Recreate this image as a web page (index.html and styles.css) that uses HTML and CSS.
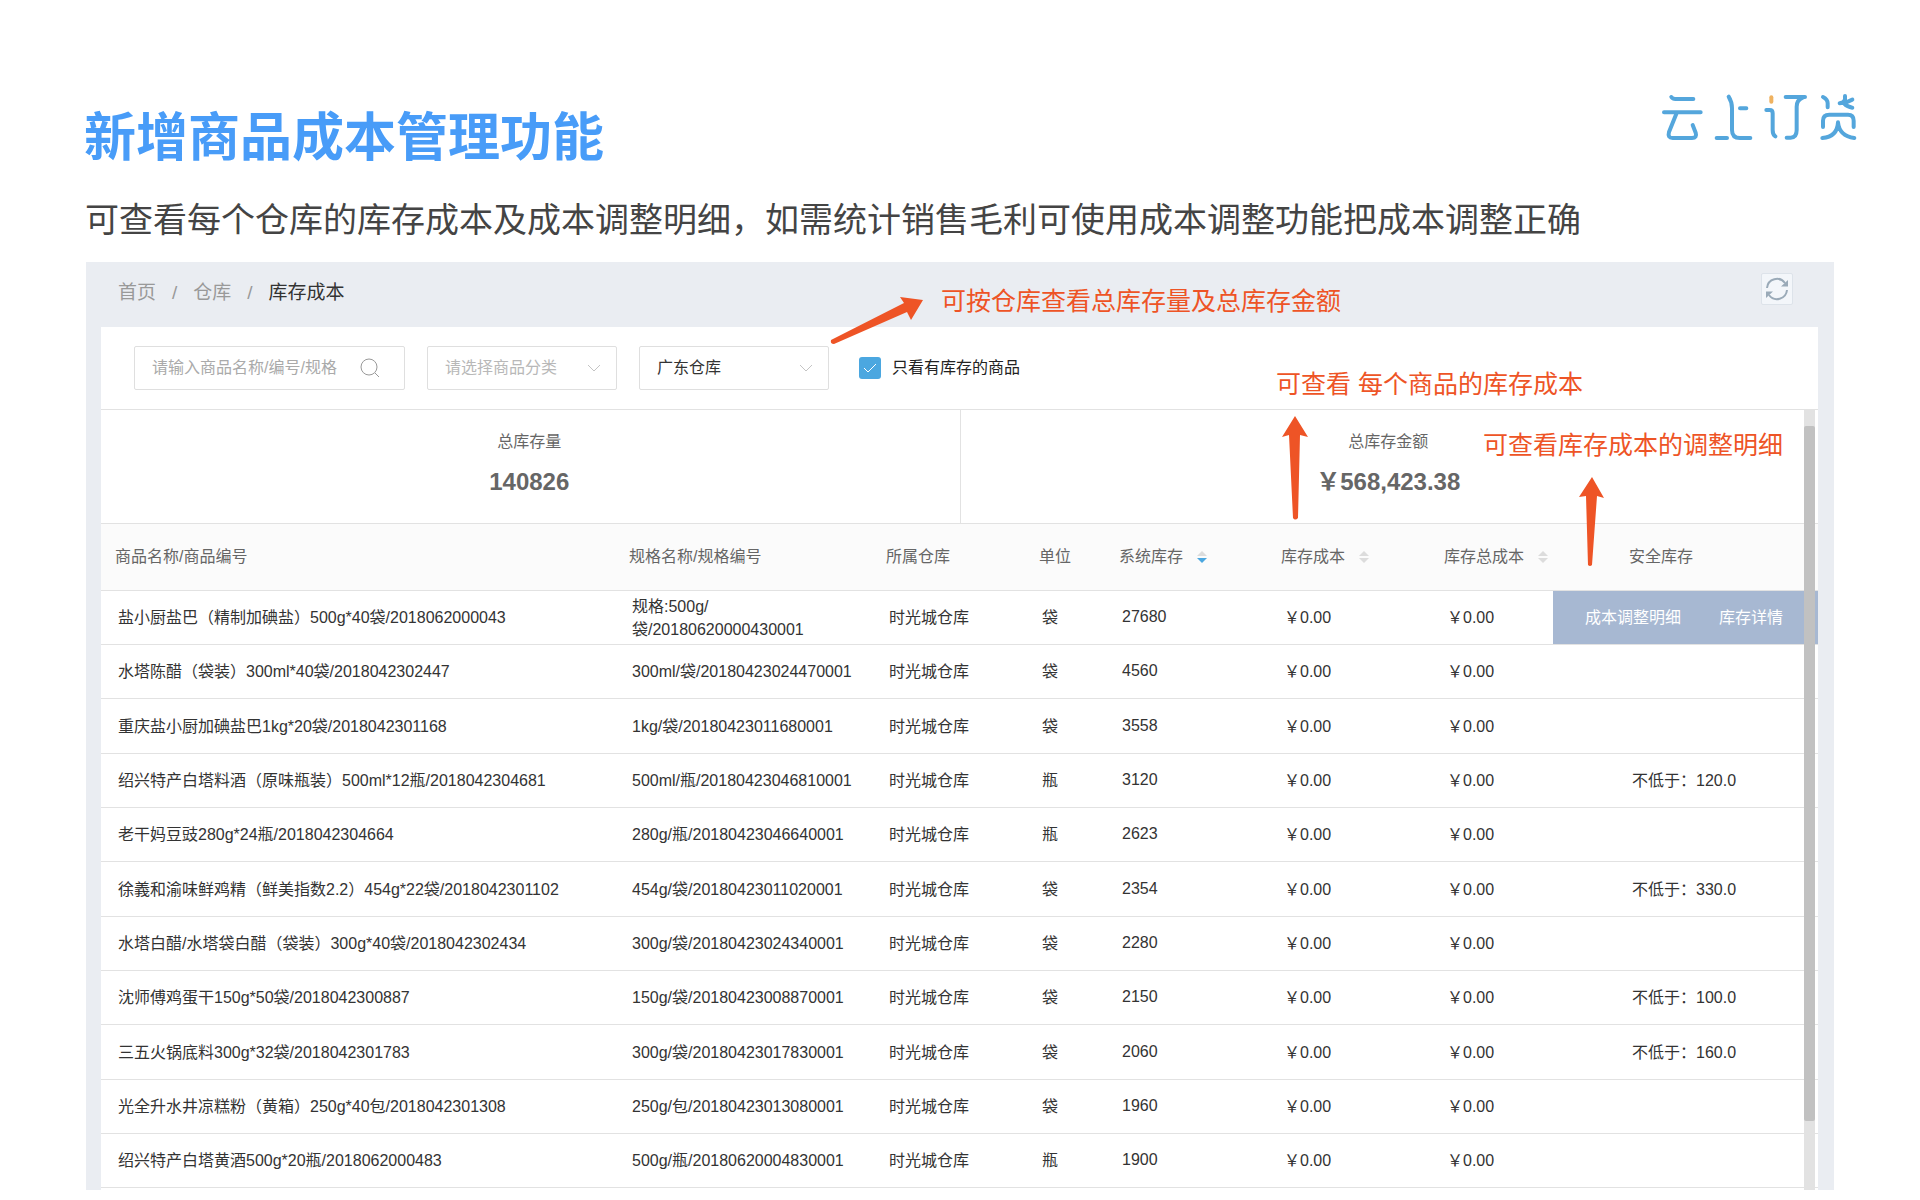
FILE: index.html
```html
<!DOCTYPE html>
<html lang="zh-CN">
<head>
<meta charset="utf-8">
<title>新增商品成本管理功能</title>
<link rel="stylesheet" href="styles.css">
</head>
<body>
<header class="page-header">
  <h1 class="page-title">新增商品成本管理功能</h1>
  <svg class="logo" viewBox="60 36 594 150" role="img" aria-label="云上订货">
    <g class="logo-stroke">
      <path d="M94 51Q98 57 106 57H160M72 97H182M110 99L87 156Q82 174 98 174H156Q172 174 167 158L158 135"/>
      <path d="M266 50Q276 66 276 85V150Q276 174 300 174H331M300 85H319M230 174H261"/>
      <path d="M379 90H389Q398 90 398 100V150Q398 164 406 169M437 51H495M488 53Q470 60 470 80V150Q470 173 452 173H440"/>
      <path d="M549 51Q563 58 563 70V82M615 48V58Q613 68 599 70M637 59L612 70Q622 81 637 83M549 141V122Q549 104 568 104H624Q641 104 641 122V141M594 127Q592 170 547 174M594 127Q598 168 643 174"/>
    </g>
    <path class="logo-dot" d="M394 52V65"/>
  </svg>
</header>
<p class="page-subtitle">可查看每个仓库的库存成本及成本调整明细，如需统计销售毛利可使用成本调整功能把成本调整正确</p>

<main class="app">
  <div class="app-bar">
    <nav class="breadcrumb" aria-label="面包屑">
      <a href="#">首页</a><span>/</span><a href="#">仓库</a><span>/</span><span class="current">库存成本</span>
    </nav>
    <button class="refresh" type="button" aria-label="刷新">
      <svg viewBox="0 0 24 24"><path class="line" d="M2 11A10 10 0 0 1 20 6M22 13A10 10 0 0 1 4 18"/><path class="head" d="M23 3V9.500H16ZM1 21V14.500H8Z"/></svg>
    </button>
  </div>

  <div class="card">
    <form class="filters">
      <div class="search">
        <input type="text" aria-label="搜索商品" placeholder="请输入商品名称/编号/规格">
        <button type="button" aria-label="搜索"><svg viewBox="0 0 20 20"><circle cx="9" cy="9" r="8"/><path d="M15 15L19 19"/></svg></button>
      </div>
      <div class="dropdown">
        <select class="empty" aria-label="商品分类"><option>请选择商品分类</option></select>
        <svg viewBox="0 0 14 8"><path d="M1 1L7 7L13 1"/></svg>
      </div>
      <div class="dropdown">
        <select aria-label="仓库"><option>广东仓库</option></select>
        <svg viewBox="0 0 14 8"><path d="M1 1L7 7L13 1"/></svg>
      </div>
      <label class="check"><input type="checkbox" checked><svg viewBox="0 0 22 22"><path d="M5 11L9 15L17 7"/></svg>只看有库存的商品</label>
    </form>

    <div class="scroll-area">
      <dl class="stats">
        <div class="stat"><dt>总库存量</dt><dd>140826</dd></div>
        <div class="stat"><dt>总库存金额</dt><dd>￥568,423.38</dd></div>
      </dl>

      <table class="stock">
        <colgroup>
          <col><col class="col-spec"><col class="col-store"><col class="col-unit"><col class="col-qty"><col class="col-cost"><col class="col-total"><col class="col-safe">
        </colgroup>
        <thead>
          <tr>
            <th>商品名称/商品编号</th><th>规格名称/规格编号</th><th>所属仓库</th><th>单位</th>
            <th>系统库存<svg class="sort desc" viewBox="0 0 10 14"><path class="up" d="M0 6L5 1L10 6Z"/><path class="down" d="M0 8L5 13L10 8Z"/></svg></th>
            <th>库存成本<svg class="sort" viewBox="0 0 10 14"><path class="up" d="M0 6L5 1L10 6Z"/><path class="down" d="M0 8L5 13L10 8Z"/></svg></th>
            <th>库存总成本<svg class="sort" viewBox="0 0 10 14"><path class="up" d="M0 6L5 1L10 6Z"/><path class="down" d="M0 8L5 13L10 8Z"/></svg></th>
            <th>安全库存</th>
          </tr>
        </thead>
        <tbody>
          <tr><td>盐小厨盐巴（精制加碘盐）500g*40袋/2018062000043</td><td>规格:500g/袋/20180620000430001</td><td>时光城仓库</td><td>袋</td><td class="qty">27680</td><td class="money">￥0.00</td><td class="money">￥0.00</td><td class="has-actions"><div class="actions"><a href="#">成本调整明细</a><a href="#">库存详情</a></div></td></tr>
          <tr><td>水塔陈醋（袋装）300ml*40袋/2018042302447</td><td>300ml/袋/20180423024470001</td><td>时光城仓库</td><td>袋</td><td class="qty">4560</td><td class="money">￥0.00</td><td class="money">￥0.00</td><td></td></tr>
          <tr><td>重庆盐小厨加碘盐巴1kg*20袋/2018042301168</td><td>1kg/袋/20180423011680001</td><td>时光城仓库</td><td>袋</td><td class="qty">3558</td><td class="money">￥0.00</td><td class="money">￥0.00</td><td></td></tr>
          <tr><td>绍兴特产白塔料酒（原味瓶装）500ml*12瓶/2018042304681</td><td>500ml/瓶/20180423046810001</td><td>时光城仓库</td><td>瓶</td><td class="qty">3120</td><td class="money">￥0.00</td><td class="money">￥0.00</td><td>不低于：120.0</td></tr>
          <tr><td>老干妈豆豉280g*24瓶/2018042304664</td><td>280g/瓶/20180423046640001</td><td>时光城仓库</td><td>瓶</td><td class="qty">2623</td><td class="money">￥0.00</td><td class="money">￥0.00</td><td></td></tr>
          <tr><td>徐義和渝味鲜鸡精（鲜美指数2.2）454g*22袋/2018042301102</td><td>454g/袋/20180423011020001</td><td>时光城仓库</td><td>袋</td><td class="qty">2354</td><td class="money">￥0.00</td><td class="money">￥0.00</td><td>不低于：330.0</td></tr>
          <tr><td>水塔白醋/水塔袋白醋（袋装）300g*40袋/2018042302434</td><td>300g/袋/20180423024340001</td><td>时光城仓库</td><td>袋</td><td class="qty">2280</td><td class="money">￥0.00</td><td class="money">￥0.00</td><td></td></tr>
          <tr><td>沈师傅鸡蛋干150g*50袋/2018042300887</td><td>150g/袋/20180423008870001</td><td>时光城仓库</td><td>袋</td><td class="qty">2150</td><td class="money">￥0.00</td><td class="money">￥0.00</td><td>不低于：100.0</td></tr>
          <tr><td>三五火锅底料300g*32袋/2018042301783</td><td>300g/袋/20180423017830001</td><td>时光城仓库</td><td>袋</td><td class="qty">2060</td><td class="money">￥0.00</td><td class="money">￥0.00</td><td>不低于：160.0</td></tr>
          <tr><td>光全升水井凉糕粉（黄箱）250g*40包/2018042301308</td><td>250g/包/20180423013080001</td><td>时光城仓库</td><td>袋</td><td class="qty">1960</td><td class="money">￥0.00</td><td class="money">￥0.00</td><td></td></tr>
          <tr><td>绍兴特产白塔黄酒500g*20瓶/2018062000483</td><td>500g/瓶/20180620004830001</td><td>时光城仓库</td><td>瓶</td><td class="qty">1900</td><td class="money">￥0.00</td><td class="money">￥0.00</td><td></td></tr>
        </tbody>
      </table>
      <div class="scrollbar"><div class="thumb"></div></div>
    </div>
  </div>

  <p class="note note-store">可按仓库查看总库存量及总库存金额</p>
  <svg class="arrow arrow-store" viewBox="0 0 96 52"><path d="M2 46L75 9L71 3L94 6L82 26L78 18L5 50Q1 50 2 46Z"/></svg>
  <p class="note note-cost">可查看 每个商品的库存成本</p>
  <svg class="arrow arrow-cost" viewBox="0 0 26 104"><path d="M13 0L26 21L18 19L16 102Q13 105 11 102L7 19L0 21Z"/></svg>
  <p class="note note-detail">可查看库存成本的调整明细</p>
  <svg class="arrow arrow-detail" viewBox="0 0 26 90"><path d="M13 0L25 21L18 19L13 88Q11 90 9 88L7 19L0 20Z"/></svg>
</main>
</body>
</html>
```

FILE: styles.css
```css
* { box-sizing: border-box; }

body {
  margin: 0;
  padding: 92px 86px 10px 86px;
  background: #fff;
  color: #333;
  font: 16px/23px "Liberation Sans", "Noto Sans CJK SC", sans-serif;
}

p, h1, dl, dd { margin: 0; }
a { color: inherit; text-decoration: none; }
button, input, select { font: inherit; color: inherit; }

.page-header {
  display: flex;
  justify-content: space-between;
  align-items: flex-start;
  margin: 0 -24px 0 -2px;
}
.page-title {
  padding-top: 16px;
  color: #489cf8;
  font-size: 52px;
  line-height: 60px;
  font-weight: 700;
}
.logo { width: 198px; height: 50px; }
.logo path { fill: none; stroke-width: 12; stroke-linecap: round; stroke-linejoin: round; }
.logo-stroke { stroke: #54a6dc; }
.logo-dot { stroke: #efb260; }

.page-subtitle {
  margin: 28px 0 18px -1px;
  color: #444;
  font-size: 34px;
  line-height: 48px;
}

.app {
  position: relative;
  padding: 0 16px 0 15px;
  background: #eaedf2;
}
.app-bar {
  display: flex;
  justify-content: space-between;
  align-items: flex-start;
  height: 65px;
  padding: 11px 25px 0 17px;
}
.breadcrumb {
  display: flex;
  gap: 16px;
  padding-top: 5px;
  color: #999;
  font-size: 19px;
  line-height: 30px;
}
.breadcrumb .current { color: #333; }
.refresh {
  display: grid;
  place-items: center;
  width: 32px;
  height: 32px;
  padding: 0;
  border: 1px solid #dde3ea;
  border-radius: 2px;
  background: #f3f6fa;
}
.refresh svg { width: 24px; height: 24px; }
.refresh .line { fill: none; stroke: #9aaab8; stroke-width: 2; }
.refresh .head { fill: #9aaab8; }

.card { padding-bottom: 2px; background: #fff; }

.filters {
  display: flex;
  align-items: center;
  gap: 22px;
  height: 83px;
  padding: 0 33px 1px;
  border-bottom: 1px solid #e2e2e2;
}
.search, .dropdown select {
  height: 44px;
  border: 1px solid #dfdfdf;
  border-radius: 2px;
  background: #fff;
}
.search {
  display: flex;
  align-items: center;
  width: 271px;
  padding: 0 24px 0 17px;
  justify-content: space-between;
}
.search input {
  width: 185px;
  padding: 0;
  border: 0;
  outline: 0;
  background: none;
}
.search input::placeholder { color: #aaa; }
.search button { display: flex; padding: 0; border: 0; background: none; }
.search svg { width: 20px; height: 20px; fill: none; stroke: #999; stroke-width: 1; }
.dropdown { display: grid; align-items: center; width: 190px; }
.dropdown select, .dropdown svg { grid-area: 1 / 1; }
.dropdown select { width: 100%; padding: 0 17px; appearance: none; }
.dropdown .empty { color: #b8b8b8; }
.dropdown svg {
  justify-self: end;
  width: 14px;
  height: 8px;
  margin-right: 16px;
  fill: none;
  stroke: #c4c4c4;
  pointer-events: none;
}
.check { display: grid; grid-template-columns: 22px auto; align-items: center; column-gap: 11px; margin-left: 8px; color: #222; }
.check input, .check svg { grid-area: 1 / 1; width: 22px; height: 22px; margin: 0; }
.check input { appearance: none; border-radius: 3px; background: #4ba7e0; }
.check svg { position: relative; fill: none; stroke: #fff; stroke-width: 1; pointer-events: none; }

.scroll-area { position: relative; }
.stats { display: grid; grid-template-columns: 1fr 1fr; border-bottom: 1px solid #e2e2e2; }
.stat {
  height: 113px;
  padding: 20px 2px 0 0;
  color: #666;
  text-align: center;
}
.stat + .stat { border-left: 1px solid #e2e2e2; }
.stat dd { margin-top: 14px; font-size: 24px; line-height: 30px; font-weight: 700; }

.stock { width: 100%; border-collapse: separate; border-spacing: 0; table-layout: fixed; }
.col-spec { width: 257px; }
.col-store { width: 153px; }
.col-unit { width: 80px; }
.col-qty { width: 162px; }
.col-cost { width: 163px; }
.col-total { width: 185px; }
.col-safe { width: 203px; }
.stock th {
  height: 67px;
  padding: 0 14px 2px;
  border-bottom: 1px solid #e2e2e2;
  background: #fbfbfb;
  color: #666;
  font-weight: 400;
  text-align: left;
  white-space: nowrap;
}
.stock td { height: 54px; padding: 0 17px; border-bottom: 1px solid #e2e2e2; }
.stock tr:nth-child(3n) td { height: 55px; }
.stock .qty { padding-bottom: 2px; }
.sort { width: 10px; height: 14px; margin-left: 14px; vertical-align: -2px; }
.sort path { fill: #dcdcdc; }
.sort.desc .down { fill: #4ba7e0; }

.has-actions { position: relative; }
.actions {
  position: absolute;
  top: 0;
  right: 0;
  bottom: 0;
  display: flex;
  align-items: center;
  gap: 38px;
  width: 265px;
  padding-left: 32px;
  background: #a7b8d2;
  color: #fff;
  white-space: nowrap;
}
.scrollbar {
  position: absolute;
  top: 0;
  right: 3px;
  bottom: -2px;
  width: 11px;
  padding-top: 16px;
  background: #e2e2e2;
}
.thumb { height: 91%; border-radius: 2px; background: #c1c1c1; }

/* Annotations laid over the screen */
.note {
  position: absolute;
  color: #ee5426;
  font-size: 25px;
  line-height: 36px;
  white-space: nowrap;
}
.note-store { top: 21px; left: 855px; }
.note-cost { top: 104px; right: 251px; }
.note-detail { top: 165px; right: 51px; }
.arrow { position: absolute; fill: #ee5426; }
.arrow-store { top: 32px; left: 743px; width: 96px; height: 52px; }
.arrow-cost { top: 154px; right: 526px; width: 26px; height: 104px; }
.arrow-detail { top: 215px; right: 229px; width: 26px; height: 90px; }
```
